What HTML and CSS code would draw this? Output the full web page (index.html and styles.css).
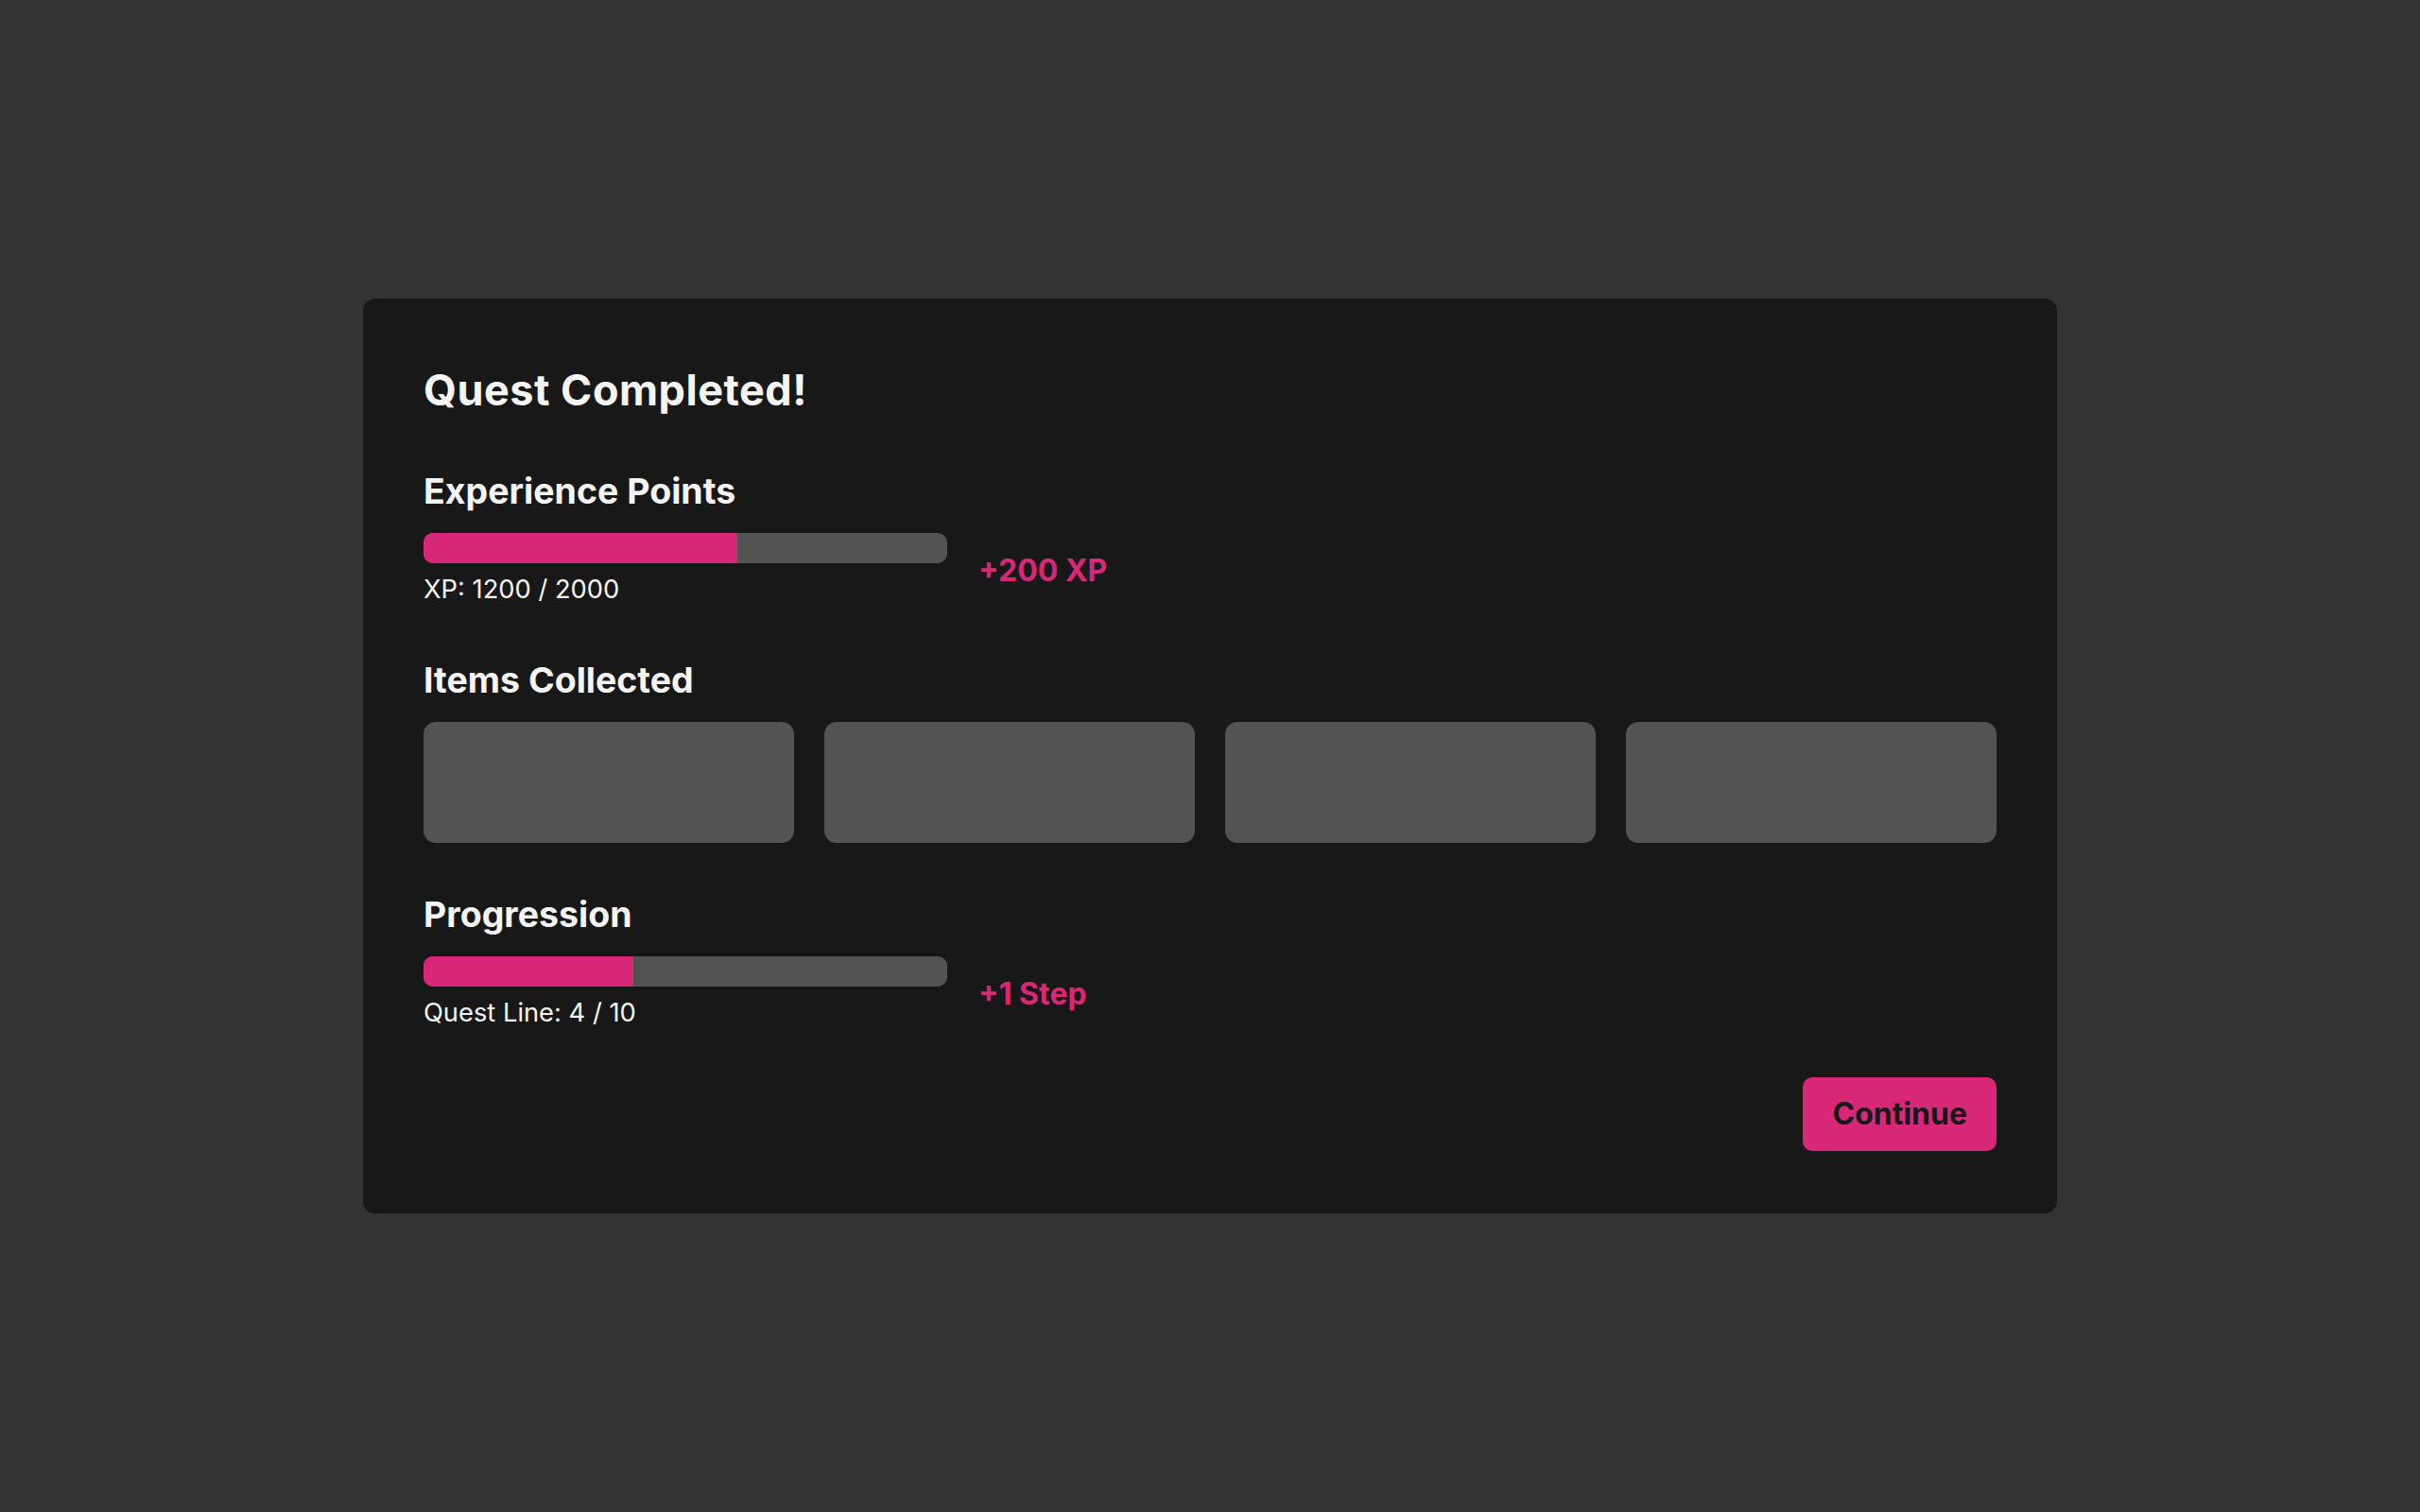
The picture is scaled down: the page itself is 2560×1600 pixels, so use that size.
FILE: index.html
```html
<!DOCTYPE html>
<html lang="en">
<head>
<meta charset="utf-8">
<title>Quest Completed</title>
<link rel="stylesheet" href="styles.css">
</head>
<body>
<div class="modal">
  <h1 class="modal-title">Quest Completed!</h1>

  <div class="block block-xp">
    <h2 class="block-title">Experience Points</h2>
    <div class="gain-row">
      <div class="meter">
        <div class="bar"><div class="bar-fill" style="width: 60%"></div></div>
        <div class="meter-text">XP: 1200 / 2000</div>
      </div>
      <span class="gain">+200 XP</span>
    </div>
  </div>

  <div class="block">
    <h2 class="block-title">Items Collected</h2>
    <div class="items">
      <div class="item"></div>
      <div class="item"></div>
      <div class="item"></div>
      <div class="item"></div>
    </div>
  </div>

  <div class="block block-progress">
    <h2 class="block-title">Progression</h2>
    <div class="gain-row">
      <div class="meter">
        <div class="bar"><div class="bar-fill" style="width: 40%"></div></div>
        <div class="meter-text">Quest Line: 4 / 10</div>
      </div>
      <span class="gain">+1 Step</span>
    </div>
  </div>

  <div class="actions">
    <button class="continue" type="button">Continue</button>
  </div>
</div>
</body>
</html>
```

FILE: styles.css
```css
/* Quest completed dialog */

html, body
{ height: 100%;
}

body
{ margin: 0;
background-color: #333333;
font-family: Inter, "Noto Sans", "DejaVu Sans", sans-serif;
color: #f5f5f5;
display: flex;
align-items: center;
justify-content: center;
}

div.modal
{ box-sizing: border-box;
width: 1792px;
padding: 66px 64px 66px 64px;
background-color: #181818;
border-radius: 13px;
}

h1.modal-title
{ margin: 6px 0 0 0;
font-size: 45px;
line-height: 50px;
font-weight: 700;
letter-spacing: 0.5px;
}

div.block
{ margin-top: 57.5px;
}

div.block-xp
{ margin-top: 60.5px;
}

div.block-progress
{ margin-top: 54.5px;
}

h2.block-title
{ margin: 0 0 22px 0;
font-size: 37.5px;
line-height: 44px;
font-weight: 700;
}

div.gain-row
{ display: flex;
align-items: center;
gap: 33px;
}

div.meter
{ width: 554px;
}

div.bar
{ height: 32px;
background-color: #535353;
border-radius: 10px;
overflow: hidden;
}

div.bar-fill
{ height: 100%;
background-color: #d92778;
}

div.meter-text
{ margin-top: 12px;
font-size: 27.3px;
line-height: 32px;
}

span.gain
{ margin-top: 3px;
color: #d92778;
font-size: 32px;
font-weight: 700;
}

div.items
{ display: grid;
grid-template-columns: repeat(4, 1fr);
gap: 32px;
}

div.item
{ height: 128px;
background-color: #535353;
border-radius: 13px;
}

div.actions
{ margin-top: 52px;
display: flex;
justify-content: flex-end;
}

button.continue
{ padding: 20px 31px;
border: none;
border-radius: 10px;
background-color: #d92778;
color: #181818;
font-family: inherit;
font-size: 32px;
line-height: 38px;
font-weight: 700;
cursor: pointer;
}
```
